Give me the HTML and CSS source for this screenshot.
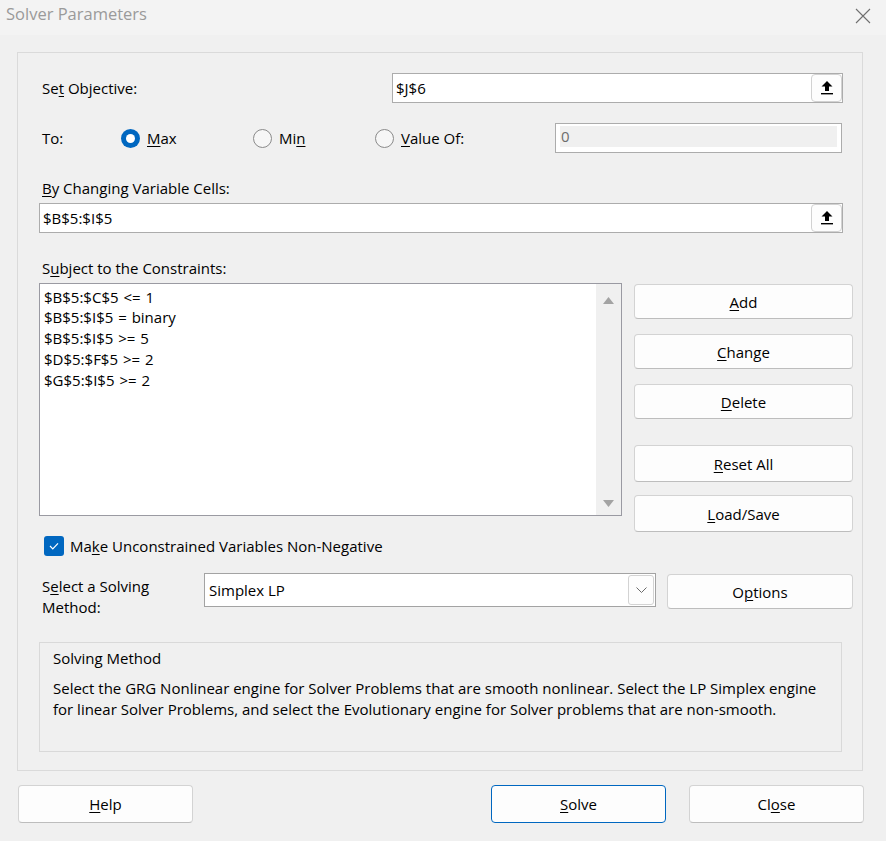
FILE: index.html
```html
<!DOCTYPE html>
<html>
<head>
<meta charset="utf-8">
<title>Solver Parameters</title>
<link rel="stylesheet" href="styles.css">
</head>
<body>
<div class="dialog">
  <div class="titlebar">
    <span class="title">Solver Parameters</span>
    <svg class="close" width="16" height="16" viewBox="0 0 16 16"><path d="M1 1 L15 15 M15 1 L1 15" stroke="#6f6f6f" stroke-width="1.1" fill="none"/></svg>
  </div>

  <div class="panel">
    <div class="row">
      <span class="lbl obj-lbl">Se<u>t</u> Objective:</span>
      <div class="refbox w-obj">
        <span class="val">$J$6</span>
        <div class="refbtn"><svg width="12" height="14" viewBox="0 0 12 14"><polygon points="6,0 11.5,5.5 8,5.5 8,10 4,10 4,5.5 0.5,5.5" fill="#000"/><rect x="0" y="12" width="12" height="1.4" fill="#000"/></svg></div>
      </div>
    </div>

    <div class="row to-row">
      <span class="lbl to-lbl">To:</span>
      <span class="radio r1"><span class="circle on"></span><span><u>M</u>ax</span></span>
      <span class="radio r2"><span class="circle"></span><span>Mi<u>n</u></span></span>
      <span class="radio r3"><span class="circle"></span><span><u>V</u>alue Of:</span></span>
      <div class="valbox"><span>0</span></div>
    </div>

    <div class="lbl sec-lbl"><u>B</u>y Changing Variable Cells:</div>
    <div class="refbox w-full">
      <span class="val">$B$5:$I$5</span>
      <div class="refbtn"><svg width="12" height="14" viewBox="0 0 12 14"><polygon points="6,0 11.5,5.5 8,5.5 8,10 4,10 4,5.5 0.5,5.5" fill="#000"/><rect x="0" y="12" width="12" height="1.4" fill="#000"/></svg></div>
    </div>

    <div class="lbl sec-lbl">S<u>u</u>bject to the Constraints:</div>
    <div class="constraints">
      <div class="listbox">
        <div class="items">
          <div>$B$5:$C$5 &lt;= 1</div>
          <div>$B$5:$I$5 = binary</div>
          <div>$B$5:$I$5 &gt;= 5</div>
          <div>$D$5:$F$5 &gt;= 2</div>
          <div>$G$5:$I$5 &gt;= 2</div>
        </div>
        <div class="scroll">
          <svg width="11" height="7" viewBox="0 0 11 7"><polygon points="5.5,0 11,7 0,7" fill="#a3a3a3"/></svg>
          <svg width="11" height="7" viewBox="0 0 11 7"><polygon points="0,0 11,0 5.5,7" fill="#a3a3a3"/></svg>
        </div>
      </div>
      <div class="btncol">
        <div class="btn b-add"><span><u>A</u>dd</span></div>
        <div class="btn b-change"><span><u>C</u>hange</span></div>
        <div class="btn b-delete"><span><u>D</u>elete</span></div>
        <div class="btn b-reset"><span><u>R</u>eset All</span></div>
        <div class="btn b-load"><span><u>L</u>oad/Save</span></div>
      </div>
    </div>

    <div class="check-row">
      <span class="checkbox"><svg width="10" height="8" viewBox="0 0 10 8"><polyline points="1,4 3.8,6.8 9,1.3" fill="none" stroke="#fff" stroke-width="1.2"/></svg></span>
      <span>Ma<u>k</u>e Unconstrained Variables Non-Negative</span>
    </div>

    <div class="method-row">
      <div class="method-lbl">S<u>e</u>lect a Solving<br>Method:</div>
      <div class="select">
        <span>Simplex LP</span>
        <div class="select-btn"><svg width="11" height="6" viewBox="0 0 11 6"><polyline points="0.5,0.5 5.5,5.5 10.5,0.5" fill="none" stroke="#6a6a6a" stroke-width="1"/></svg></div>
      </div>
      <div class="btn opt-btn"><span>O<u>p</u>tions</span></div>
    </div>

    <div class="desc">
      <div class="desc-title">Solving Method</div>
      <div class="desc-text">Select the GRG Nonlinear engine for Solver Problems that are smooth nonlinear. Select the LP Simplex engine<br>for linear Solver Problems, and select the Evolutionary engine for Solver problems that are non-smooth.</div>
    </div>
  </div>

  <div class="footer">
    <div class="btn fbtn help"><span><u>H</u>elp</span></div>
    <div class="btn fbtn solve"><span><u>S</u>olve</span></div>
    <div class="btn fbtn close-btn"><span>Cl<u>o</u>se</span></div>
  </div>
</div>
</body>
</html>
```

FILE: styles.css
```css
* { box-sizing: border-box; }
html, body { margin: 0; padding: 0; }
body {
  width: 886px;
  height: 841px;
  overflow: hidden;
  background: #f0f0f0;
  font-family: "Open Sans", "Noto Sans", sans-serif;
  font-size: 15px;
  color: #000;
}
u { text-decoration: underline; text-underline-offset: 2px; text-decoration-thickness: 1px; }

.dialog {
  width: 886px;
  height: 841px;
  background: #f0f0f0;
  display: flex;
  flex-direction: column;
}

.titlebar {
  height: 35px;
  flex: none;
  background: #f3f3f3;
  display: flex;
  justify-content: space-between;
  align-items: flex-start;
  padding: 2px 15px 0 6px;
}
.title { font-size: 16.5px; line-height: 24px; color: #9a9a9a; }
.close { margin-top: 6px; }

.panel {
  margin: 17px 0 0 17px;
  width: 846px;
  height: 719px;
  flex: none;
  border: 1px solid #dadada;
  padding: 20px 9px 0 21px;
}

.row { display: flex; align-items: center; height: 30px; }
.lbl { line-height: 20px; }
.obj-lbl { width: 350px; margin-left: 3px; }

.refbox {
  height: 30px;
  border: 1px solid #acacac;
  background: #fff;
  display: flex;
  align-items: center;
}
.refbox .val { flex: 1; padding-left: 3px; }
.w-obj { width: 451px; }
.w-full { width: 804px; }
.refbtn {
  width: 31px;
  height: 28px;
  border: 1px solid #d2d2d2;
  border-radius: 4px;
  background: #fdfdfd;
  display: flex;
  align-items: center;
  justify-content: center;
}

.to-row { margin-top: 20px; }
.to-lbl { width: 79px; margin-left: 3px; }
.radio { display: flex; align-items: center; gap: 7px; }
.r1 { width: 132px; }
.r2 { width: 122px; }
.r3 { width: 180px; }
.circle {
  width: 19px;
  height: 19px;
  flex: none;
  border-radius: 50%;
  border: 1px solid #8a8a8a;
  background: #f6f6f6;
}
.circle.on {
  border: none;
  background: #0067c0;
  display: flex;
  align-items: center;
  justify-content: center;
}
.circle.on::after {
  content: "";
  width: 9px;
  height: 9px;
  border-radius: 50%;
  background: #fff;
}
.valbox {
  width: 287px;
  height: 30px;
  border: 1px solid #acacac;
  background: #fff;
  padding: 2px 4px 5px 4px;
}
.valbox span {
  display: block;
  height: 100%;
  background: #f0f0f0;
  color: #6d6d6d;
  padding-left: 1px;
  line-height: 21px;
}

.sec-lbl { margin: 25px 0 5px 3px; }

.constraints { display: flex; gap: 12px; align-items: flex-start; }
.listbox {
  width: 583px;
  height: 233px;
  border: 1px solid #9a9aa2;
  background: #fff;
  display: flex;
}
.items { flex: 1; padding: 2.5px 0 0 4px; line-height: 20.75px; word-spacing: 1px; }
.scroll {
  width: 25px;
  background: #f0f0f0;
  display: flex;
  flex-direction: column;
  justify-content: space-between;
  align-items: center;
  padding: 12.5px 0 8px;
}

.btn {
  height: 35px;
  border: 1px solid #d3d3d3;
  border-bottom-color: #bdbdbd;
  border-radius: 4px;
  background: #fdfdfd;
  display: flex;
  align-items: center;
  justify-content: center;
}
.btncol { width: 219px; display: flex; flex-direction: column; margin-top: 1px; }
.b-change { margin-top: 15px; }
.b-delete { margin-top: 15px; }
.b-reset { margin-top: 26px; height: 37px; }
.b-load { margin-top: 13px; height: 37px; }

.check-row {
  margin-top: 4px;
  height: 20px;
  display: flex;
  align-items: center;
  gap: 6px;
  padding-left: 5px;
}
.checkbox {
  width: 20px;
  height: 20px;
  border-radius: 3px;
  background: #0067c0;
  display: flex;
  align-items: center;
  justify-content: center;
}

.method-row {
  margin-top: 17px;
  margin-bottom: 33px;
  height: 36px;
  display: flex;
  align-items: flex-start;
}
.method-lbl { width: 162px; margin-left: 3px; padding-top: 3px; line-height: 21px; }
.select {
  width: 452px;
  height: 34px;
  border: 1px solid #a3a3a3;
  background: #fff;
  display: flex;
  align-items: center;
  justify-content: space-between;
  padding: 0 1px 0 4px;
}
.select-btn {
  width: 26px;
  height: 30px;
  border: 1px solid #d3d3d3;
  border-radius: 3px;
  background: #fdfdfd;
  display: flex;
  align-items: center;
  justify-content: center;
}
.opt-btn { width: 186px; margin-left: 11px; margin-top: 1px; }

.desc {
  width: 803px;
  height: 110px;
  border: 1px solid #d9d9d9;
  padding: 5px 0 0 13px;
}
.desc-title { line-height: 20px; }
.desc-text { margin-top: 9.5px; line-height: 21px; white-space: nowrap; }

.footer { margin-top: 14px; display: flex; padding: 0 22px 0 18px; }
.fbtn { width: 175px; height: 38px; }
.help { margin-right: auto; }
.solve { border-color: #0067c0; }
.close-btn { margin-left: 23px; }
```
